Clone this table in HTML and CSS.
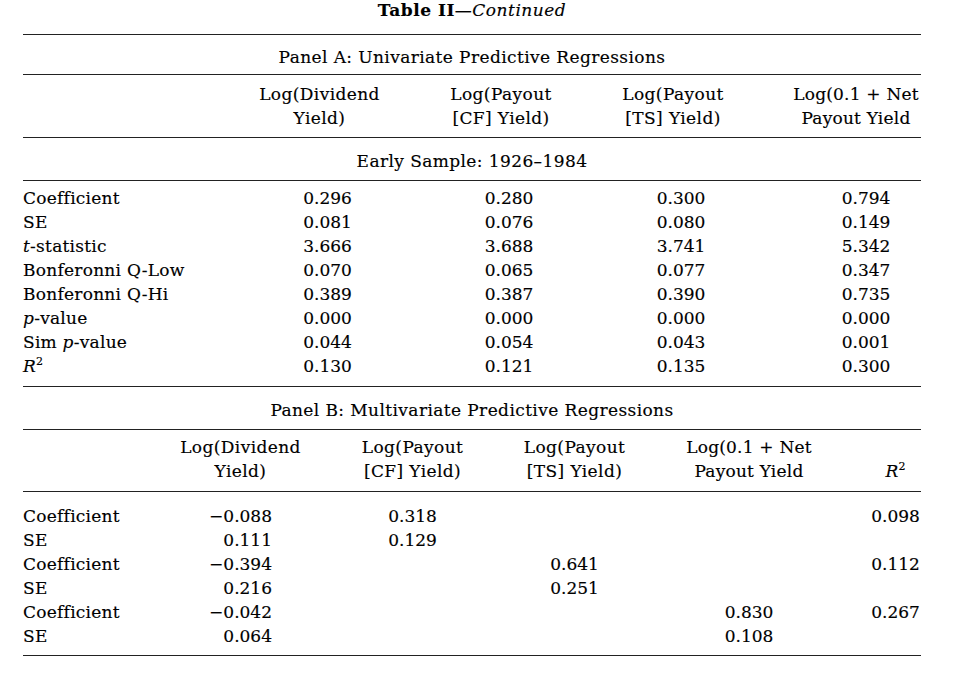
FILE: index.html
```html
<!DOCTYPE html>
<html lang="en">
<head>
<meta charset="utf-8">
<title>Table II — Continued</title>
<link rel="stylesheet" href="styles.css">
</head>
<body>
<div class="page">
  <h1 class="title"><b>Table II</b>—<i>Continued</i></h1>

  <section class="panel">
    <div class="panel-title">Panel A: Univariate Predictive Regressions</div>
    <div class="grid-a head">
      <div></div>
      <div class="h">Log(Dividend<br>Yield)</div>
      <div class="h">Log(Payout<br>[CF] Yield)</div>
      <div class="h">Log(Payout<br>[TS] Yield)</div>
      <div class="h c4">Log(0.1 + Net<br>Payout Yield</div>
    </div>
    <div class="subtitle">Early Sample: 1926–1984</div>
    <div class="grid-a body-a">
      <div class="lbl">Coefficient</div><div class="d">0.296</div><div class="d">0.280</div><div class="d">0.300</div><div class="d c4">0.794</div>
      <div class="lbl">SE</div><div class="d">0.081</div><div class="d">0.076</div><div class="d">0.080</div><div class="d c4">0.149</div>
      <div class="lbl"><i>t</i>-statistic</div><div class="d">3.666</div><div class="d">3.688</div><div class="d">3.741</div><div class="d c4">5.342</div>
      <div class="lbl">Bonferonni Q-Low</div><div class="d">0.070</div><div class="d">0.065</div><div class="d">0.077</div><div class="d c4">0.347</div>
      <div class="lbl">Bonferonni Q-Hi</div><div class="d">0.389</div><div class="d">0.387</div><div class="d">0.390</div><div class="d c4">0.735</div>
      <div class="lbl"><i>p</i>-value</div><div class="d">0.000</div><div class="d">0.000</div><div class="d">0.000</div><div class="d c4">0.000</div>
      <div class="lbl">Sim <i>p</i>-value</div><div class="d">0.044</div><div class="d">0.054</div><div class="d">0.043</div><div class="d c4">0.001</div>
      <div class="lbl"><i>R</i><sup>2</sup></div><div class="d">0.130</div><div class="d">0.121</div><div class="d">0.135</div><div class="d c4">0.300</div>
    </div>
  </section>

  <section class="panel">
    <div class="subtitle">Panel B: Multivariate Predictive Regressions</div>
    <div class="grid-b head-b">
      <div></div>
      <div class="h">Log(Dividend<br>Yield)</div>
      <div class="h">Log(Payout<br>[CF] Yield)</div>
      <div class="h">Log(Payout<br>[TS] Yield)</div>
      <div class="h tight">Log(0.1 + Net<br>Payout Yield</div>
      <div class="h r2"><br><i>R</i><sup>2</sup></div>
    </div>
    <div class="grid-b body-b">
      <div class="lbl">Coefficient</div><div class="num">−0.088</div><div class="h n">0.318</div><div></div><div></div><div class="h r2 n">0.098</div>
      <div class="lbl">SE</div><div class="num">0.111</div><div class="h n">0.129</div><div></div><div></div><div></div>
      <div class="lbl">Coefficient</div><div class="num">−0.394</div><div></div><div class="h n">0.641</div><div></div><div class="h r2 n">0.112</div>
      <div class="lbl">SE</div><div class="num">0.216</div><div></div><div class="h n">0.251</div><div></div><div></div>
      <div class="lbl">Coefficient</div><div class="num">−0.042</div><div></div><div></div><div class="h n">0.830</div><div class="h r2 n">0.267</div>
      <div class="lbl">SE</div><div class="num">0.064</div><div></div><div></div><div class="h n">0.108</div><div></div>
    </div>
  </section>
</div>
</body>
</html>
```

FILE: styles.css
```css
html, body {
  margin: 0;
  padding: 0;
  background: #ffffff;
}

body {
  font-family: "DejaVu Serif", "Liberation Serif", serif;
  font-size: 17px;
  color: #000000;
  letter-spacing: 0.4px;
  -webkit-text-stroke: 0.15px #000000;
}

.page {
  width: 898px;
  margin-left: 23px;
}

.title {
  margin: 0 0 14px 0;
  font-size: 17px;
  font-weight: normal;
  line-height: 20px;
  letter-spacing: 0.5px;
  text-align: center;
}

.title b {
  font-weight: bold;
}

.panel {
  border-top: 1px solid #222;
}

.panel + .panel {
  border-top: none;
}

.panel-title {
  text-align: center;
  line-height: 24px;
  padding: 10px 0 5px;
  border-bottom: 1px solid #222;
}

.subtitle {
  text-align: center;
  line-height: 24px;
  padding: 11px 0 7px;
  border-bottom: 1px solid #222;
}

.grid-a {
  display: grid;
  grid-template-columns: 201px 191px 172px 172px 162px;
  line-height: 24px;
}

.grid-b {
  display: grid;
  grid-template-columns: 137px 161px 183px 141px 208px 68px;
  line-height: 24px;
}

.head {
  padding: 7px 0 7px;
  border-bottom: 1px solid #222;
}

.body-a {
  padding: 5px 0 8px;
  border-bottom: 1px solid #222;
}

.head-b {
  padding: 5px 0 8px;
  border-bottom: 1px solid #222;
}

.body-b {
  padding: 12px 0 7px;
  border-bottom: 1px solid #222;
}

.h {
  text-align: center;
  white-space: nowrap;
}

.d,
.n,
.num {
  letter-spacing: 0;
}

.d {
  text-align: center;
  padding-left: 16px;
}

.c4 {
  padding-left: 32px;
  letter-spacing: 0.2px;
}

.tight {
  letter-spacing: 0.2px;
}

.d.c4 {
  padding-left: 52px;
  letter-spacing: 0;
}

.lbl {
  white-space: nowrap;
  letter-spacing: 0.25px;
}

.num {
  text-align: right;
  padding-right: 49px;
}

.r2 {
  padding-left: 17px;
}

sup {
  font-size: 11px;
  line-height: 0;
  vertical-align: 7px;
  letter-spacing: 0;
}
```
